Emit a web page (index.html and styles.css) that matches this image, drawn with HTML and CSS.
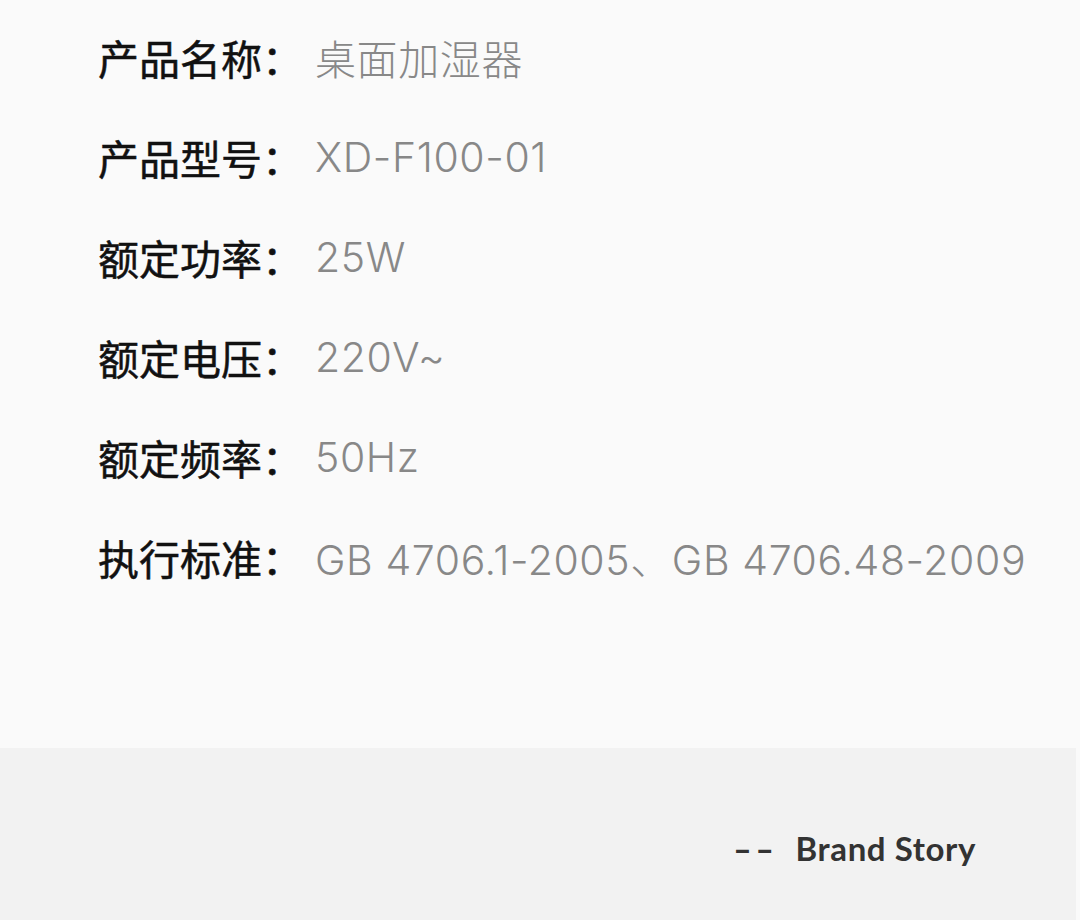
FILE: index.html
```html
<!DOCTYPE html>
<html lang="zh-CN">
<head>
<meta charset="utf-8">
<link rel="stylesheet" href="styles.css">
</head>
<body>
<section class="specs">
  <div class="row"><span class="label">产品名称：</span><span class="value">桌面加湿器</span></div>
  <div class="row"><span class="label">产品型号：</span><span class="value">XD-F100-01</span></div>
  <div class="row"><span class="label">额定功率：</span><span class="value">25W</span></div>
  <div class="row"><span class="label">额定电压：</span><span class="value">220V~</span></div>
  <div class="row"><span class="label">额定频率：</span><span class="value">50Hz</span></div>
  <div class="row"><span class="label">执行标准：</span><span class="value">GB 4706.1-2005、GB 4706.48-2009</span></div>
</section>
<section class="brand">
  <div class="brand-title"><span class="dash">--</span>Brand Story</div>
</section>
</body>
</html>
```
FILE: styles.css
```css
html, body {
  margin: 0;
  padding: 0;
  background: #fafafa;
}
body {
  width: 1080px;
  height: 920px;
  overflow: hidden;
  font-family: "Noto Sans CJK SC", "Noto Sans", sans-serif;
}
.specs {
  height: 748px;
  box-sizing: border-box;
  padding: 7px 0 0 98px;
  background: #fafafa;
}
.row {
  display: flex;
  align-items: center;
  height: 100px;
}
.label {
  font-size: 41px;
  font-weight: 400;
  color: #111111;
  width: 217px;
  white-space: nowrap;
  -webkit-text-stroke: 0.5px #111111;
}
.value {
  font-family: "Inter", "Noto Sans CJK SC", sans-serif;
  font-weight: 300;
  font-size: 41px;
  color: #888888;
  letter-spacing: 0.6px;
  white-space: nowrap;
}
.brand {
  height: 172px;
  margin-right: 4px;
  background: #f2f2f2;
  display: flex;
  justify-content: flex-end;
  align-items: flex-start;
  padding: 80px 100px 0 0;
  box-sizing: border-box;
}
.brand-title {
  font-family: "Lato", "Noto Sans", sans-serif;
  font-weight: 700;
  font-size: 33px;
  color: #333333;
  letter-spacing: 0.6px;
}
.dash {
  margin-right: 18px;
  letter-spacing: 2.5px;
  font-weight: 700;
  display: inline-block;
  transform: scaleX(1.5);
  transform-origin: right center;
}
```
